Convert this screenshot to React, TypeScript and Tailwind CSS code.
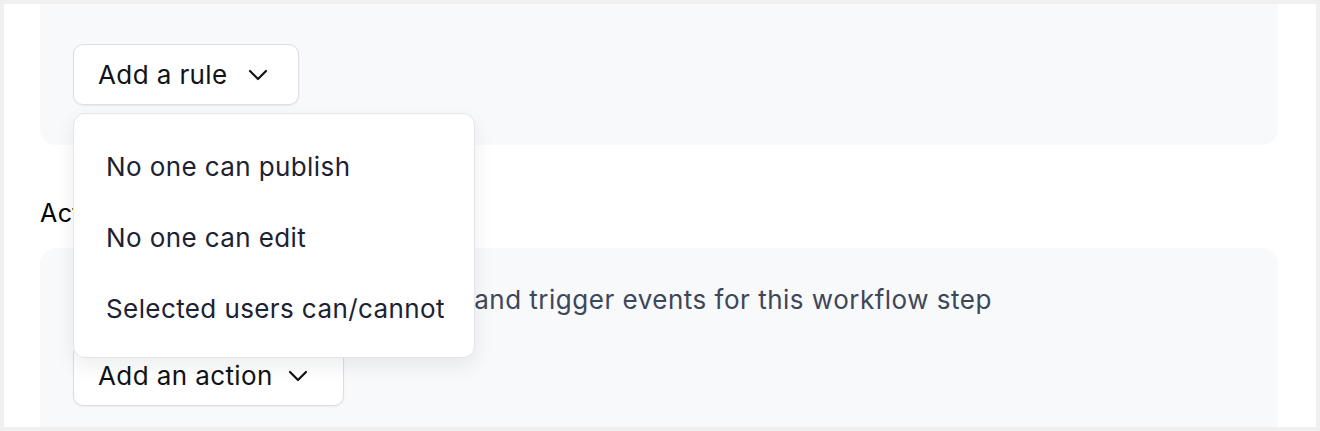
import React from "react";

const font = { fontFamily: "Inter, 'Noto Sans', sans-serif" };

function Chevron() {
  return (
    <svg width="20" height="12" viewBox="0 0 20 12" fill="none" stroke="currentColor" strokeWidth="2.2" strokeLinecap="round" strokeLinejoin="round">
      <path d="M2 2l8 8 8-8" />
    </svg>
  );
}

const ruleOptions = ["No one can publish", "No one can edit", "Selected users can/cannot"];

export default function App() {
  return (
    <div className="w-[1320px] h-[431px] overflow-hidden bg-[#f0f0f1] p-[4px] tracking-[0.4px]" style={font}>
      <div className="h-full bg-white pl-[36px] pr-[38px] flex flex-col">
        {/* Rules panel */}
        <div className="bg-[#f8f9fb] rounded-b-2xl h-[141px] shrink-0 pt-[40px] px-[33px]">
          <div className="relative inline-block">
            <button className="flex items-center gap-[20px] h-[61px] pl-[24px] pr-[30px] bg-white border border-[#dcdee3] rounded-[10px] shadow-[0_1px_2px_rgba(0,0,0,0.06)] text-[26px] text-[#111318]">
              Add a rule
              <Chevron />
            </button>
            {/* Dropdown menu */}
            <div className="absolute left-0 top-[69px] z-10 w-[402px] h-[245px] bg-white border border-[#e3e5e9] rounded-xl shadow-[0_8px_20px_rgba(15,23,42,0.08)] py-[17px]">
              {ruleOptions.map((opt) => (
                <div key={opt} className="h-[71px] flex items-center pl-[32px] text-[26px] text-[#1c2233]">
                  {opt}
                </div>
              ))}
            </div>
          </div>
        </div>

        {/* Actions heading */}
        <div className="h-[103px] shrink-0 pt-[56px]">
          <h3 className="text-[25px] leading-[24px] text-black">Actions</h3>
        </div>

        {/* Actions panel */}
        <div className="flex-1 bg-[#f8f9fb] rounded-t-2xl px-[33px] pt-[34px]">
          <p className="text-[26px] leading-[36px] tracking-[0.5px] text-[#3d4759] whitespace-nowrap">
            Set up notifications, webhooks and trigger events for this workflow step
          </p>
          <button className="mt-[27px] flex items-center gap-[15px] h-[61px] pl-[24px] pr-[35px] bg-white border border-[#dcdee3] rounded-[10px] shadow-[0_1px_2px_rgba(0,0,0,0.06)] text-[26px] text-[#111318]">
            Add an action
            <Chevron />
          </button>
        </div>
      </div>
    </div>
  );
}
